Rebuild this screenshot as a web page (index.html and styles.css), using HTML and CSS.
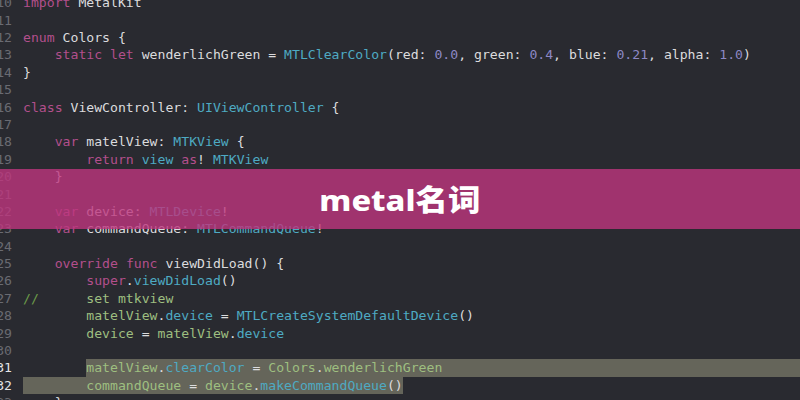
FILE: index.html
```html
<!DOCTYPE html>
<html lang="zh">
<head>
<meta charset="utf-8">
<title>metal名词</title>
<link rel="stylesheet" href="styles.css">
</head>
<body>
<div class="editor">
  <div class="line"><span class="ln">10</span><span class="code"><span class="kw">import</span> MetalKit</span></div>
  <div class="line"><span class="ln">11</span><span class="code"></span></div>
  <div class="line"><span class="ln">12</span><span class="code"><span class="kw">enum</span> Colors {</span></div>
  <div class="line"><span class="ln">13</span><span class="code">    <span class="kw">static</span> <span class="kw">let</span> wenderlichGreen = <span class="ty">MTLClearColor</span>(red: <span class="num">0.0</span>, green: <span class="num">0.4</span>, blue: <span class="num">0.21</span>, alpha: <span class="num">1.0</span>)</span></div>
  <div class="line"><span class="ln">14</span><span class="code">}</span></div>
  <div class="line"><span class="ln">15</span><span class="code"></span></div>
  <div class="line"><span class="ln">16</span><span class="code"><span class="kw">class</span> ViewController: <span class="ty">UIViewController</span> {</span></div>
  <div class="line"><span class="ln">17</span><span class="code"></span></div>
  <div class="line"><span class="ln">18</span><span class="code">    <span class="kw">var</span> matelView: <span class="ty">MTKView</span> {</span></div>
  <div class="line"><span class="ln">19</span><span class="code">        <span class="kw">return</span> <span class="ty">view</span> <span class="kw">as</span>! <span class="ty">MTKView</span></span></div>
  <div class="line"><span class="ln">20</span><span class="code">    }</span></div>
  <div class="line"><span class="ln">21</span><span class="code"></span></div>
  <div class="line"><span class="ln">22</span><span class="code">    <span class="kw">var</span> device: <span class="ty">MTLDevice</span>!</span></div>
  <div class="line"><span class="ln">23</span><span class="code">    <span class="kw">var</span> commandQueue: <span class="ty">MTLCommandQueue</span>!</span></div>
  <div class="line"><span class="ln">24</span><span class="code"></span></div>
  <div class="line"><span class="ln">25</span><span class="code">    <span class="kw">override</span> <span class="kw">func</span> viewDidLoad() {</span></div>
  <div class="line"><span class="ln">26</span><span class="code">        <span class="kw">super</span>.<span class="ty">viewDidLoad</span>()</span></div>
  <div class="line"><span class="ln">27</span><span class="code"><span class="cm">//</span>      <span class="pr">set mtkview</span></span></div>
  <div class="line"><span class="ln">28</span><span class="code">        <span class="pr">matelView</span>.<span class="ty">device</span> = <span class="ty">MTLCreateSystemDefaultDevice</span>()</span></div>
  <div class="line"><span class="ln">29</span><span class="code">        <span class="pr">device</span> = <span class="pr">matelView</span>.<span class="ty">device</span></span></div>
  <div class="line"><span class="ln">30</span><span class="code"></span></div>
  <div class="line cur"><span class="ln">31</span><span class="code fill"><span class="indent">        </span><span class="sel-rest"><span class="pr">matelView</span>.<span class="ty">clearColor</span> = <span class="pr">Colors</span>.<span class="pr">wenderlichGreen</span></span></span></div>
  <div class="line cur"><span class="ln">32</span><span class="code"><span class="sel">        <span class="pr">commandQueue</span> = <span class="pr">device</span>.<span class="ty">makeCommandQueue</span>()</span></span></div>
  <div class="line"><span class="ln">33</span><span class="code">    }</span></div>
</div>
<div class="banner"><h1 class="title">metal名词</h1></div>
</body>
</html>
```

FILE: styles.css
```css
html, body {
  margin: 0;
  padding: 0;
}
body {
  width: 800px;
  height: 400px;
  overflow: hidden;
  position: relative;
  background: #292a30;
}
.editor {
  margin-top: -5.8px;
  font-family: "DejaVu Sans Mono", "Liberation Mono", monospace;
  font-size: 13.15px;
  color: #dcdcde;
}
.line {
  display: flex;
  height: 17.4px;
  line-height: 17.4px;
  white-space: pre;
}
.ln {
  flex: none;
  width: 12px;
  display: flex;
  justify-content: flex-end;
  color: #6a6b72;
}
.cur .ln {
  color: #e4e4e6;
}
.code {
  margin-left: 11px;
}
.code.fill {
  flex: 1;
  display: flex;
}
.indent {
  flex: none;
}
.sel-rest {
  flex: 1;
  background: #65655a;
}
.sel {
  display: inline-block;
  height: 17.4px;
  background: #65655a;
}
.kw { color: #b34f8c; }
.ty { color: #4eaac3; }
.num { color: #8d88c6; }
.cm { color: #6c9c4a; }
.pr { color: #9ebf80; }

.banner {
  position: absolute;
  left: 0;
  right: 0;
  top: 169px;
  height: 60px;
  background: rgba(190, 54, 126, 0.8);
  display: flex;
  align-items: center;
  justify-content: center;
}
.title {
  margin: 0;
  font-family: "Noto Sans", "Noto Sans CJK SC", sans-serif;
  font-weight: 800;
  font-size: 29px;
  line-height: 1;
  color: #ffffff;
  transform: scaleX(1.12);
}
```
